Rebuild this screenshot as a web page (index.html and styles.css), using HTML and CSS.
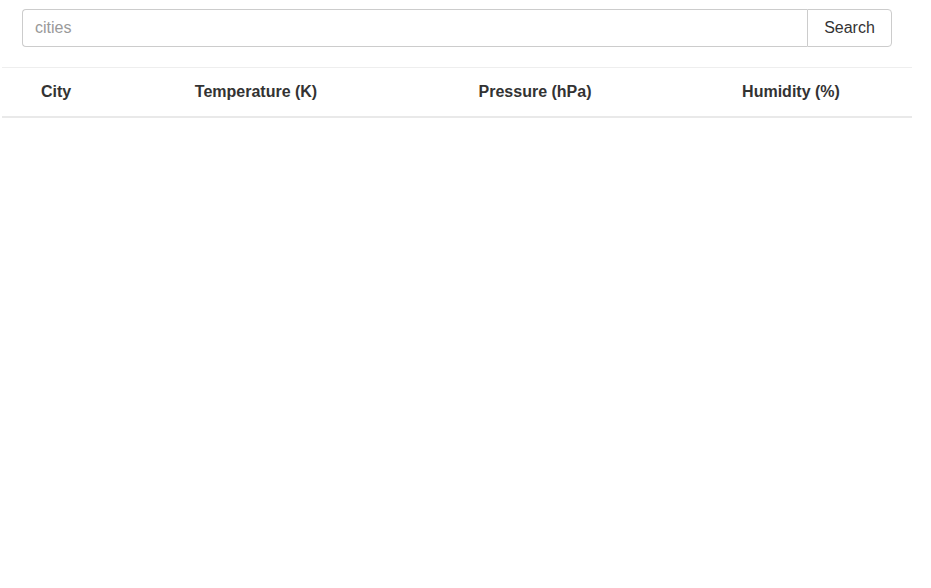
FILE: index.html
```html
<!DOCTYPE html>
<html>
<head>
<meta charset="utf-8">
<link rel="stylesheet" href="styles.css">
</head>
<body>
<form class="search">
  <input class="search-input" type="text" placeholder="cities">
  <button class="search-btn" type="button">Search</button>
</form>
<table class="weather">
  <thead>
    <tr>
      <th class="col-city">City</th>
      <th class="col-temp">Temperature (K)</th>
      <th class="col-pres">Pressure (hPa)</th>
      <th class="col-hum">Humidity (%)</th>
    </tr>
  </thead>
  <tbody></tbody>
</table>
</body>
</html>
```
FILE: styles.css
```css
html, body {
  margin: 0;
  padding: 0;
  background: #fff;
}
body {
  font-family: "Liberation Sans", Arial, sans-serif;
  font-size: 16px;
  line-height: 1.5;
  color: #333;
}
.search {
  display: flex;
  margin: 9px 39px 0 22px;
  height: 38px;
}
.search-input {
  flex: 1;
  box-sizing: border-box;
  height: 38px;
  margin: 0;
  padding: 6px 12px;
  font-family: inherit;
  font-size: 16px;
  color: #495057;
  border: 1px solid #ccc;
  border-right: none;
  border-radius: 4px 0 0 4px;
  outline: none;
}
.search-input::placeholder {
  color: #999;
}
.search-btn {
  box-sizing: border-box;
  width: 85px;
  height: 38px;
  margin: 0;
  padding: 6px 12px;
  font-family: inherit;
  font-size: 16px;
  color: #333;
  background: #fff;
  border: 1px solid #ccc;
  border-radius: 0 4px 4px 0;
}
.weather {
  margin: 20px 0 0 2px;
  width: 910px;
  border-collapse: collapse;
  table-layout: fixed;
}
.weather th {
  box-sizing: border-box;
  height: 49px;
  padding: 0 12px;
  text-align: center;
  font-weight: bold;
  border-top: 1px solid #eee;
  border-bottom: 2px solid #e9e9e9;
  vertical-align: middle;
}
.col-city { width: 108px; }
.col-temp { width: 290px; }
.weather .col-temp { padding-left: 14px; }
.col-pres { width: 270px; }
.col-hum { width: 242px; }
```
